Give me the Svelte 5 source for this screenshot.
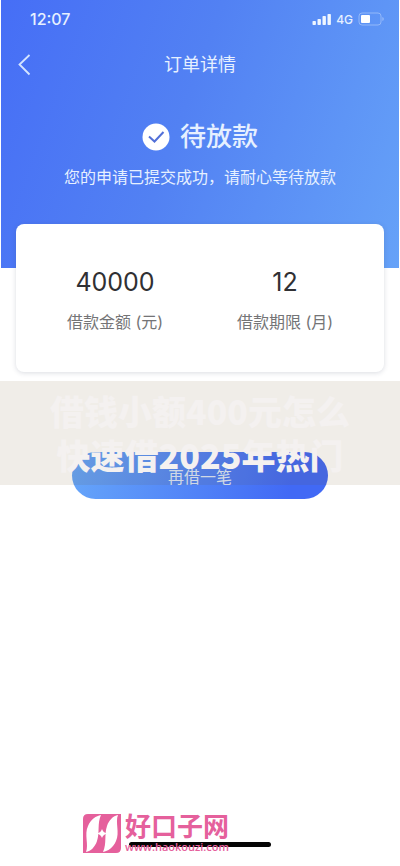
<script lang="ts">
  interface Figure {
    label: string;
    value: string;
  }

  const figures: Figure[] = [
    { label: '借款金额 (元)', value: '40000' },
    { label: '借款期限 (月)', value: '12' }
  ];

  const bars = [4, 6, 9, 11];
</script>

<div class="page">
  <header class="hero">
    <div class="status-bar">
      <span class="time">12:07</span>
      <div class="indicators">
        <svg width="19" height="12" viewBox="0 0 19 12" aria-hidden="true">
          {#each bars as height, i}
            <rect x={i * 5 + 0.5} y={12 - height} width="3.4" {height} rx="0.8" fill="#eef5ff" />
          {/each}
        </svg>
        <span class="network">4G</span>
        <svg width="27" height="14" viewBox="0 0 27 14" aria-hidden="true">
          <rect x="1" y="1" width="22" height="12" rx="3" fill="none" stroke="#93b8f9" />
          <rect x="3" y="3" width="9" height="8" rx="1" fill="#fff" />
          <path d="M24.5 5v4c1.5-.5 1.5-3.5 0-4z" fill="#a9c8fa" />
        </svg>
      </div>
    </div>

    <nav class="title-bar">
      <button class="back" aria-label="返回">
        <svg width="14" height="22" viewBox="0 0 14 22" aria-hidden="true">
          <path d="M12.5 1L2.5 10.5l10 10" fill="none" stroke="#d5e5ff" stroke-width="1.8" />
        </svg>
      </button>
      <h1>订单详情</h1>
    </nav>

    <div class="state">
      <svg width="28" height="28" viewBox="0 0 28 28" aria-hidden="true">
        <circle cx="14" cy="14" r="13.5" fill="#fff" />
        <path d="M7 13.5l5.5 5 9-9.5" fill="none" stroke="#5270d8" stroke-width="2" />
      </svg>
      <h2>待放款</h2>
    </div>
    <p class="hint">您的申请已提交成功，请耐心等待放款</p>
  </header>

  <dl class="card">
    {#each figures as figure}
      <div class="figure">
        <dt>{figure.label}</dt>
        <dd>{figure.value}</dd>
      </div>
    {/each}
  </dl>

  <div class="action">
    <button class="again">再借一笔</button>
    <div class="banner">借钱小额400元怎么<br />快速借2025年热门</div>
  </div>

  <footer>
    <div class="home-indicator"></div>
    <a class="brand" href="http://www.haokouzi.com">
      <svg width="38" height="39" viewBox="0 0 38 39" aria-hidden="true">
        <path d="M5 0h33v34q0 5-5 5H0V5q0-5 5-5z" fill="#e5609c" />
        <path d="M3 38C6 31 1 20 5 12 8 5 13 2 18 1 14 10 17 18 14 27 12 33 8 37 3 38z" fill="#fff" />
        <path d="M35 1C32 8 37 19 33 27 30 34 25 37 20 38 24 29 21 21 24 12 26 6 30 2 35 1z" fill="#fff" />
        <path d="M19 15q1 3.5 5 4.500-4 1-5 4.500-1-3.500-5-4.500 4-1 5-4.500z" fill="#fff" />
      </svg>
      <span class="brand-text">
        <strong>好口子网</strong>
        <small>www.haokouzi.com</small>
      </span>
    </a>
  </footer>
</div>

<style>
  :global(body) {
    margin: 0;
    background: #fff;
  }

  .page {
    display: flex;
    flex-direction: column;
    min-height: 100vh;
    font-family: Inter, "Noto Sans CJK SC", sans-serif;
  }

  h1, h2, p, dl, dd {
    margin: 0;
    font-weight: 400;
  }

  button {
    padding: 0;
    border: 0;
    font: inherit;
    cursor: pointer;
  }

  .hero {
    height: 268px;
    margin: 0 1px;
    background: linear-gradient(110deg, #466ef6 0%, #5281f3 45%, #66a2f8 100%);
    color: #e6f0ff;
  }

  .status-bar {
    display: flex;
    align-items: center;
    justify-content: space-between;
    height: 38px;
    padding: 0 14px 0 29px;
  }

  .time {
    font-size: 16px;
    font-weight: 500;
  }

  .indicators {
    display: flex;
    align-items: center;
    gap: 5px;
  }

  .network {
    font-size: 12px;
    font-weight: 500;
  }

  .title-bar {
    display: grid;
    grid-template-columns: 48px 1fr 48px;
    align-items: center;
    height: 54px;
  }

  .back {
    display: flex;
    padding-left: 16px;
    background: none;
  }

  h1 {
    font-size: 18px;
    line-height: 24px;
    text-align: center;
  }

  .state {
    display: flex;
    align-items: center;
    justify-content: center;
    gap: 10px;
    padding-top: 25px;
  }

  h2 {
    font-size: 26px;
    font-weight: 500;
    line-height: 40px;
  }

  .hint {
    padding-top: 8px;
    font-size: 16px;
    line-height: 24px;
    text-align: center;
  }

  .card {
    display: flex;
    justify-content: space-around;
    box-sizing: border-box;
    height: 148px;
    margin: -44px 16px 0;
    padding: 40px 14px 0;
    border-radius: 8px;
    background: #fff;
    box-shadow: 0 1px 5px rgba(50, 60, 90, 0.18);
  }

  .figure {
    display: flex;
    flex: 1;
    flex-direction: column-reverse;
    justify-content: flex-end;
    gap: 10px;
    text-align: center;
  }

  dt {
    color: #747476;
    font-size: 16px;
    line-height: 24px;
  }

  dd {
    color: #303033;
    font-size: 25px;
    line-height: 36px;
  }

  .action {
    position: relative;
    display: flex;
    justify-content: center;
    margin-top: 9px;
    padding-top: 71px;
  }

  .again {
    width: 64%;
    height: 47px;
    border-radius: 24px;
    background: linear-gradient(100deg, #66a6fa, #4169f5 85%);
    color: #dce8fc;
    font-size: 16px;
  }

  .banner {
    position: absolute;
    inset: 0 0 auto;
    box-sizing: border-box;
    height: 104px;
    padding-top: 8px;
    background: rgba(110, 80, 30, 0.1);
    color: #f4f1f0;
    font-family: "Noto Sans CJK SC", sans-serif;
    font-size: 34px;
    font-weight: 900;
    line-height: 44px;
    text-align: center;
    pointer-events: none;
  }

  footer {
    position: relative;
    margin-top: auto;
    padding: 0 83px 13px;
  }

  .home-indicator {
    position: absolute;
    bottom: 19px;
    left: 50%;
    width: 142px;
    height: 5px;
    margin-left: -71px;
    border-radius: 3px;
    background: #050505;
  }

  .brand {
    position: relative;
    display: flex;
    align-items: center;
    gap: 4px;
    color: #e5609c;
    text-decoration: none;
  }

  .brand-text {
    display: flex;
    flex-direction: column;
  }

  strong {
    font-size: 26px;
    font-weight: 700;
    line-height: 28px;
  }

  small {
    font-family: "Open Sans", sans-serif;
    font-size: 11px;
    font-weight: 600;
    line-height: 12px;
  }
</style>
